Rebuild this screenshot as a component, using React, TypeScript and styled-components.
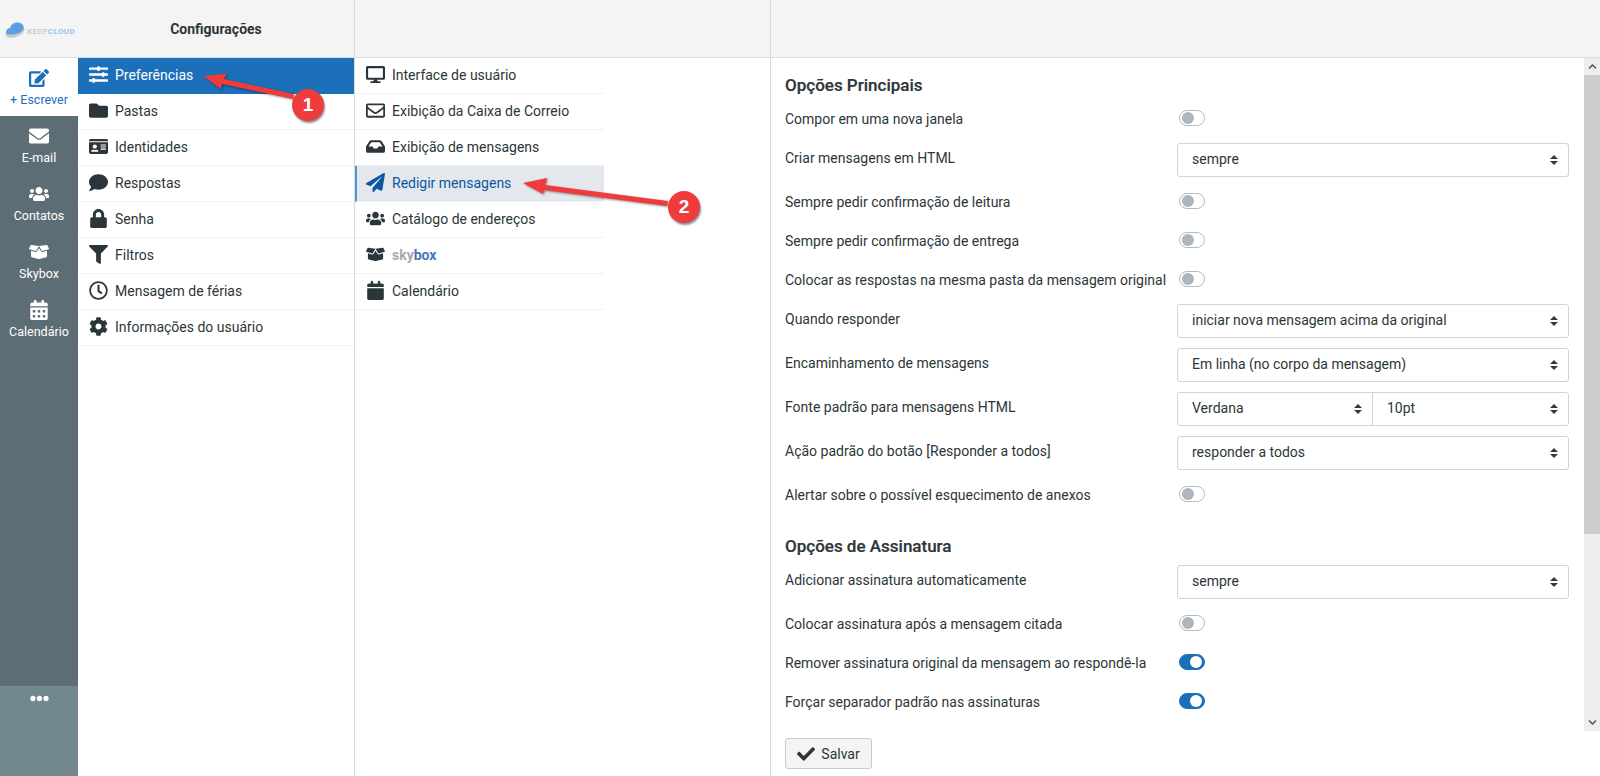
import React from 'react';
import styled, { createGlobalStyle } from 'styled-components';
import {
  FaSlidersH, FaFolder, FaIdCard, FaComment, FaLock, FaFilter, FaRegClock, FaCog,
  FaDesktop, FaRegEnvelope, FaInbox, FaPaperPlane, FaUsers, FaBoxOpen, FaCalendar,
  FaEdit, FaEnvelope, FaCalendarAlt, FaCheck, FaEllipsisH, FaChevronUp, FaChevronDown,
} from 'react-icons/fa';

const GlobalStyle = createGlobalStyle`
  html, body { margin: 0; padding: 0; height: 100%; overflow: hidden; background: #fff; }
  body { font-family: Roboto, "Liberation Sans", sans-serif; font-size: 14px; color: #2c363a; }
  * { box-sizing: border-box; }
`;

const Page = styled.div`
  position: relative;
  width: 1600px;
  height: 776px;
  display: flex;
  flex-direction: column;
  overflow: hidden;
`;

const Header = styled.header`
  height: 58px;
  flex: none;
  display: grid;
  grid-template-columns: 355px 416px 1fr;
  background: #f4f4f4;
  border-bottom: 1px solid #d9dddf;
`;

const HeaderCell = styled.div`
  border-right: 1px solid #d9dddf;
  display: flex;
  align-items: center;
  &:last-child { border-right: 0; }
`;

const Logo = styled.div`
  width: 78px;
  flex: none;
  display: flex;
  align-items: center;
  gap: 2px;
  padding: 3px 0 0 5px;
`;

const LogoText = styled.span`
  font-size: 8px;
  letter-spacing: 0.4px;
  font-weight: 500;
  color: #c3c8cb;
  white-space: nowrap;
  margin-top: 2px;
  b { font-weight: 700; color: #9cc4ec; }
`;

const HeaderTitle = styled.div`
  flex: 1;
  text-align: center;
  font-weight: 700;
  font-size: 14px;
`;

const Body = styled.div`
  flex: 1;
  min-height: 0;
  display: grid;
  grid-template-columns: 78px 277px 416px 1fr;
`;

const Sidebar = styled.nav`
  background: #5c6d75;
  display: flex;
  flex-direction: column;
`;

const SideItem = styled.div<{ $active?: boolean }>`
  height: 58px;
  flex: none;
  display: flex;
  flex-direction: column;
  align-items: center;
  padding-top: 10px;
  font-size: 12.5px;
  line-height: 16px;
  gap: 4px;
  color: ${p => (p.$active ? '#1c6fb9' : '#fff')};
  background: ${p => (p.$active ? '#fff' : 'transparent')};
  svg { height: 20px; width: auto; flex: none; }
`;

const SideSpacer = styled.div`
  flex: 1;
`;

const SideMore = styled.div`
  height: 90px;
  flex: none;
  background: #73878f;
  color: #fff;
  display: flex;
  justify-content: center;
  padding-top: 3px;
  svg { font-size: 19px; }
`;

const NavColumn = styled.div`
  border-right: 1px solid #d4dce0;
`;

const NavList = styled.ul<{ $width?: number }>`
  list-style: none;
  margin: 0;
  padding: 0;
  width: ${p => (p.$width ? `${p.$width}px` : 'auto')};
`;

const NavRow = styled.li<{ $state?: 'primary' | 'selected' }>`
  height: 36px;
  display: flex;
  align-items: center;
  border-bottom: 1px solid ${p => (p.$state === 'primary' ? '#1c6fb9' : '#f0f1f2')};
  padding-left: ${p => (p.$state === 'selected' ? '8px' : '10px')};
  padding-bottom: 2px;
  gap: 7px;
  font-size: 14px;
  color: ${p => (p.$state === 'primary' ? '#fff' : p.$state === 'selected' ? '#0a56a5' : '#2c363a')};
  background: ${p => (p.$state === 'primary' ? '#1c6fb9' : p.$state === 'selected' ? '#e4e8ec' : '#fff')};
  border-left: ${p => (p.$state === 'selected' ? '2px solid #4a96de' : '0')};
`;

const NavIcon = styled.span`
  width: 20px;
  flex: none;
  display: flex;
  align-items: center;
  justify-content: center;
  font-size: 19px;
  svg { height: 1em; width: auto; flex: none; }
`;

const SkyLabel = styled.span`
  font-weight: 700;
  color: #a9a9a9;
  b { color: #4a76b8; font-weight: 700; }
`;

const Content = styled.div`
  min-width: 0;
  display: flex;
  flex-direction: column;
`;

const ScrollArea = styled.div`
  height: 673px;
  flex: none;
  display: flex;
`;

const Form = styled.div`
  flex: 1;
  padding: 13px 15px 0 14px;
  overflow: hidden;
`;

const SectionTitle = styled.h3<{ $spaced?: boolean }>`
  margin: ${p => (p.$spaced ? '18px' : '0')} 0 0;
  height: 28px;
  line-height: 28px;
  font-size: 17px;
  font-weight: 500;
  color: #2c363a;
  -webkit-text-stroke: 0.2px #2c363a;
`;

const FieldRow = styled.div<{ $tall?: boolean }>`
  height: ${p => (p.$tall ? '44px' : '39px')};
  display: grid;
  grid-template-columns: 392px 1fr;
  align-items: ${p => (p.$tall ? 'start' : 'center')};
  padding-top: ${p => (p.$tall ? '5px' : '0')};
`;

const FieldLabel = styled.label<{ $tall?: boolean }>`
  font-size: 14px;
  line-height: 20px;
  white-space: nowrap;
  padding-top: ${p => (p.$tall ? '5px' : '0')};
`;

const SelectGroup = styled.div`
  display: flex;
`;

const Select = styled.select<{ $joined?: 'left' | 'right' }>`
  appearance: none;
  flex: ${p => (p.$joined === 'left' ? '0 0 196px' : '1')};
  min-width: 0;
  height: 34px;
  padding: 0 30px 2px 14px;
  font: 14px Roboto, "Liberation Sans", sans-serif;
  color: #2c363a;
  background: #fff url("data:image/svg+xml,%3Csvg xmlns='http://www.w3.org/2000/svg' width='8' height='10'%3E%3Cpath fill='%23343a40' d='M4 0 8 4H0zM4 10 0 6h8z'/%3E%3C/svg%3E") no-repeat right 10px center;
  border: 1px solid #ced4da;
  border-radius: ${p => (p.$joined === 'left' ? '3px 0 0 3px' : p.$joined === 'right' ? '0 3px 3px 0' : '3px')};
  margin-left: ${p => (p.$joined === 'right' ? '-1px' : '0')};
`;

const Toggle = styled.span<{ $on?: boolean }>`
  width: 26px;
  height: 16px;
  margin-left: 2px;
  margin-top: -1px;
  border-radius: 8px;
  display: flex;
  align-items: center;
  padding: 0 2px;
  justify-content: ${p => (p.$on ? 'flex-end' : 'flex-start')};
  border: 1px solid ${p => (p.$on ? '#1c6fb9' : '#b4bbc1')};
  background: ${p => (p.$on ? '#1c6fb9' : '#fff')};
  &::after {
    content: '';
    width: 12px;
    height: 12px;
    border-radius: 50%;
    background: ${p => (p.$on ? '#fff' : '#adb5bd')};
  }
`;

const Scrollbar = styled.div`
  width: 16px;
  flex: none;
  display: flex;
  flex-direction: column;
  background: #eee;
  color: #505050;
`;

const ScrollButton = styled.div`
  height: 17px;
  flex: none;
  display: flex;
  align-items: center;
  justify-content: center;
  font-size: 9px;
`;

const ScrollThumb = styled.div`
  height: 459px;
  flex: none;
  background: #ccc;
`;

const ScrollTrack = styled.div`
  flex: 1;
`;

const Footer = styled.div`
  padding: 7px 14px 0;
`;

const SaveButton = styled.button`
  height: 31px;
  width: 87px;
  display: flex;
  align-items: center;
  justify-content: center;
  gap: 6px;
  font: 14px Roboto, "Liberation Sans", sans-serif;
  color: #2c363a;
  background: #f4f4f4;
  border: 1px solid #c6cbcf;
  border-radius: 3px;
  svg { font-size: 18px; }
`;

const Annotations = styled.svg`
  position: absolute;
  left: 0;
  top: 0;
  pointer-events: none;
  filter: drop-shadow(1px 1px 1px rgba(0, 0, 0, 0.45));
`;

const Badge = styled.div<{ $x: number; $y: number }>`
  position: absolute;
  left: ${p => p.$x - 16}px;
  top: ${p => p.$y - 16}px;
  width: 32px;
  height: 32px;
  border-radius: 50%;
  background: #ef3b3b;
  color: #fff;
  font: 700 19px "Liberation Sans", sans-serif;
  display: flex;
  align-items: center;
  justify-content: center;
  box-shadow: 1px 2px 2px rgba(0, 0, 0, 0.45);
`;

const Cloud = () => (
  <svg width="20" height="16" viewBox="0 0 20 16">
    <ellipse cx="10" cy="10" rx="10" ry="5" fill="#c4cacd" transform="rotate(-20 10 10)" />
    <path d="M1 10.500c0-3 2-4.500 4-4.500C6 2.500 9 0 13 .5c4 .5 6.500 3 5.500 6-1 3-5 5.500-10.500 6-4 .3-7-.2-7-2z" fill="#5b9fe3" />
  </svg>
);

const primaryNav = [
  { icon: <FaSlidersH />, label: 'Preferências', state: 'primary' as const },
  { icon: <FaFolder />, label: 'Pastas' },
  { icon: <FaIdCard />, label: 'Identidades' },
  { icon: <FaComment />, label: 'Respostas' },
  { icon: <FaLock />, label: 'Senha' },
  { icon: <FaFilter />, label: 'Filtros' },
  { icon: <FaRegClock />, label: 'Mensagem de férias' },
  { icon: <FaCog />, label: 'Informações do usuário' },
];

const secondaryNav = [
  { icon: <FaDesktop />, label: <>Interface de usuário</> },
  { icon: <FaRegEnvelope />, label: <>Exibição da Caixa de Correio</> },
  { icon: <FaInbox />, label: <>Exibição de mensagens</> },
  { icon: <FaPaperPlane />, label: <>Redigir mensagens</>, state: 'selected' as const },
  { icon: <FaUsers />, label: <>Catálogo de endereços</> },
  { icon: <FaBoxOpen />, label: <SkyLabel>sky<b>box</b></SkyLabel> },
  { icon: <FaCalendar />, label: <>Calendário</> },
];

function SelectField({ label, value }: { label: string; value: string }) {
  return (
    <FieldRow $tall>
      <FieldLabel $tall>{label}</FieldLabel>
      <Select defaultValue={value}><option>{value}</option></Select>
    </FieldRow>
  );
}

function ToggleField({ label, on }: { label: string; on?: boolean }) {
  return (
    <FieldRow>
      <FieldLabel>{label}</FieldLabel>
      <Toggle $on={on} />
    </FieldRow>
  );
}

export default function App() {
  return (
    <Page>
      <GlobalStyle />
      <Header>
        <HeaderCell>
          <Logo>
            <Cloud />
            <LogoText>KEEP<b>CLOUD</b></LogoText>
          </Logo>
          <HeaderTitle>Configurações</HeaderTitle>
        </HeaderCell>
        <HeaderCell />
        <HeaderCell />
      </Header>

      <Body>
        <Sidebar>
          <SideItem $active><FaEdit />+ Escrever</SideItem>
          <SideItem><FaEnvelope />E-mail</SideItem>
          <SideItem><FaUsers />Contatos</SideItem>
          <SideItem><FaBoxOpen />Skybox</SideItem>
          <SideItem><FaCalendarAlt />Calendário</SideItem>
          <SideSpacer />
          <SideMore><FaEllipsisH /></SideMore>
        </Sidebar>

        <NavColumn>
          <NavList>
            {primaryNav.map(item => (
              <NavRow key={item.label} $state={item.state}>
                <NavIcon>{item.icon}</NavIcon>
                {item.label}
              </NavRow>
            ))}
          </NavList>
        </NavColumn>

        <NavColumn>
          <NavList $width={249}>
            {secondaryNav.map((item, i) => (
              <NavRow key={i} $state={item.state}>
                <NavIcon>{item.icon}</NavIcon>
                {item.label}
              </NavRow>
            ))}
          </NavList>
        </NavColumn>

        <Content>
          <ScrollArea>
            <Form>
              <SectionTitle>Opções Principais</SectionTitle>
              <ToggleField label="Compor em uma nova janela" />
              <SelectField label="Criar mensagens em HTML" value="sempre" />
              <ToggleField label="Sempre pedir confirmação de leitura" />
              <ToggleField label="Sempre pedir confirmação de entrega" />
              <ToggleField label="Colocar as respostas na mesma pasta da mensagem original" />
              <SelectField label="Quando responder" value="iniciar nova mensagem acima da original" />
              <SelectField label="Encaminhamento de mensagens" value="Em linha (no corpo da mensagem)" />
              <FieldRow $tall>
                <FieldLabel $tall>Fonte padrão para mensagens HTML</FieldLabel>
                <SelectGroup>
                  <Select $joined="left" defaultValue="Verdana"><option>Verdana</option></Select>
                  <Select $joined="right" defaultValue="10pt"><option>10pt</option></Select>
                </SelectGroup>
              </FieldRow>
              <SelectField label="Ação padrão do botão [Responder a todos]" value="responder a todos" />
              <ToggleField label="Alertar sobre o possível esquecimento de anexos" />

              <SectionTitle $spaced>Opções de Assinatura</SectionTitle>
              <SelectField label="Adicionar assinatura automaticamente" value="sempre" />
              <ToggleField label="Colocar assinatura após a mensagem citada" />
              <ToggleField label="Remover assinatura original da mensagem ao respondê-la" on />
              <ToggleField label="Forçar separador padrão nas assinaturas" on />
            </Form>
            <Scrollbar>
              <ScrollButton><FaChevronUp /></ScrollButton>
              <ScrollThumb />
              <ScrollTrack />
              <ScrollButton><FaChevronDown /></ScrollButton>
            </Scrollbar>
          </ScrollArea>
          <Footer>
            <SaveButton><FaCheck />Salvar</SaveButton>
          </Footer>
        </Content>
      </Body>

      <Annotations width="1600" height="776" viewBox="0 0 1600 776">
        <polygon fill="#ef3b3b" points="203,76 227,73.5 224,79 294,94 293,99 222,84 221,89" />
        <polygon fill="#ef3b3b" points="523,183 547,178 545,185 668,201 667,206 544,190 543,194" />
      </Annotations>
      <Badge $x={308} $y={105}>1</Badge>
      <Badge $x={684} $y={207}>2</Badge>
    </Page>
  );
}
